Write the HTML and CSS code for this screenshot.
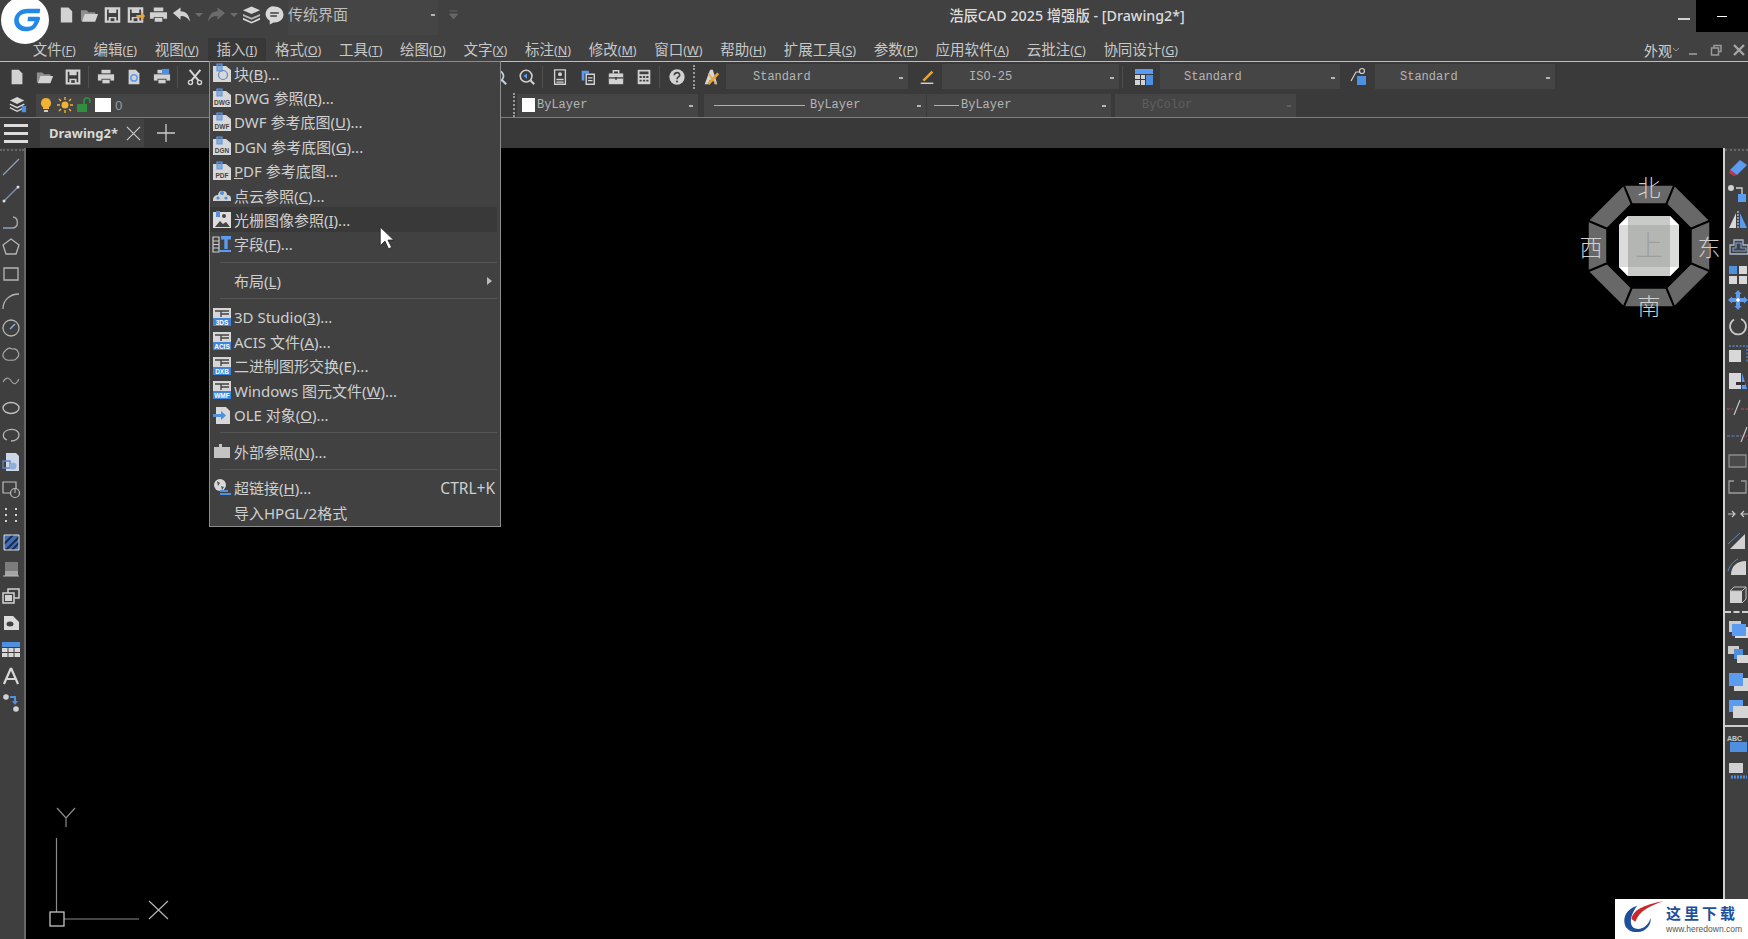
FILE: index.html
```html
<!DOCTYPE html>
<html lang="zh-CN">
<head>
  <meta charset="UTF-8" />
  <title>浩辰CAD 2025 增强版 - [Drawing2*]</title>
  <link rel="stylesheet" href="styles.css">
</head>
<body>
  <!-- shared icons -->
  <svg class="sprite" xmlns="http://www.w3.org/2000/svg">
    <symbol id="i-new" viewBox="0 0 20 20"><path d="M4 2h8l4 4v12H4z" fill="#d2d2d2"/></symbol>
    <symbol id="i-open" viewBox="0 0 20 20"><path d="M1 5h6l2 2h7v2H6L3 16H1z" fill="#8f8f8f"/><path d="M5 9h14l-3 8H2z" fill="#d2d2d2"/></symbol>
    <symbol id="i-save" viewBox="0 0 20 20"><path d="M3 3h14v14H3z" fill="none" stroke="#d2d2d2" stroke-width="2.4"/><path d="M6 3h8v5H6zM6 12h8v5H6z" fill="#d2d2d2"/><path d="M8 13.500h4v3H8z" fill="#404040"/></symbol>
    <symbol id="i-print" viewBox="0 0 20 20"><path d="M5 2h10v4H5z" fill="#d2d2d2"/><path d="M1 7h18v7H1z" fill="#d2d2d2"/><path d="M5 12h10v6H5z" fill="#404040"/><path d="M6 13h8v4H6z" fill="#d2d2d2"/></symbol>
    <symbol id="i-dd" viewBox="0 0 8 8"><path d="M0 2h8L4 6z" fill="#6d6d6d"/></symbol>
    <symbol id="i-doc" viewBox="0 0 20 20"><path d="M1 3h13l5 4v12H1z" fill="#d8d8d8"/><path d="M5 1h5v7H5z" fill="#5b86c5" opacity=".55"/><path d="M5 1h5v7H5z" fill="none" stroke="#5b9bf0" stroke-width="1.200"/></symbol>
    <symbol id="i-imp" viewBox="0 0 20 20"><path d="M1 1h18v11H1z" fill="#d6d6d6"/><path d="M3 4h14M9 7h8M9 4v6" stroke="#444" stroke-width="1.400" fill="none"/><path d="M1 11h18v8H1z" fill="#3f84d8"/></symbol>
  </svg>

  <div class="app">
    <header class="titlebar">
      <div class="quick">
        <svg class="slot-q" viewBox="0 0 20 20"><use href="#i-new"/></svg>
        <svg class="slot-q" viewBox="0 0 20 20"><use href="#i-open"/></svg>
        <svg class="slot-q" viewBox="0 0 20 20"><use href="#i-save"/></svg>
        <svg class="slot-q" viewBox="0 0 20 20"><use href="#i-save"/><path d="M11 10h5V6l4 5-4 6v-4h-5z" fill="#e8a33a"/></svg>
        <svg class="slot-q" viewBox="0 0 20 20"><use href="#i-print"/></svg>
        <svg class="slot-q" viewBox="0 0 20 20"><path d="M1 8l8-6v4c6 0 9 4 10 11-2-4-5-6-10-6v4z" fill="#d2d2d2"/></svg>
        <svg class="slot-d" viewBox="0 0 8 8"><use href="#i-dd"/></svg>
        <svg class="slot-q" viewBox="0 0 20 20"><path d="M19 8l-8-6v4C5 6 2 10 1 17c2-4 5-6 10-6v4z" fill="#6a6a6a"/></svg>
        <svg class="slot-d" viewBox="0 0 8 8"><use href="#i-dd"/></svg>
        <svg class="slot-q" viewBox="0 0 20 20"><path d="M10 1l9 4-9 4-9-4z" fill="#d6d6d6"/><path d="M1 9l9 4 9-4v2l-9 4-9-4z" fill="#b9b9b9"/><path d="M1 13l9 4 9-4v2l-9 4-9-4z" fill="#d6d6d6"/></svg>
        <svg class="slot-q" viewBox="0 0 20 20"><path d="M10 1a9 8 0 0 1 0 17H9l-4 2v-4a8 8 0 0 1 5-15z" fill="#d8d8d8"/><path d="M5.500 8h9M5.500 11h7" stroke="#404040" stroke-width="1.600"/></svg>
        <div class="workspace">传统界面<i class="dot"></i></div>
        <svg class="slot-s" viewBox="0 0 10 12"><path d="M1 2h8M1 5h8L5 10z" fill="#666" stroke="#666"/></svg>
      </div>
      <div class="title">浩辰CAD 2025 增强版 - [Drawing2*]</div>
      <div class="winbtns">
        <span class="win-min"></span>
        <span class="win-black"><span></span></span>
      </div>
    </header>

    <nav class="menubar">
      <span class="mi">文件<small>(<u>F</u>)</small></span>
      <span class="mi">编辑<small>(<u>E</u>)</small></span>
      <span class="mi">视图<small>(<u>V</u>)</small></span>
      <span class="mi active">插入<small>(<u>I</u>)</small></span>
      <span class="mi">格式<small>(<u>O</u>)</small></span>
      <span class="mi">工具<small>(<u>T</u>)</small></span>
      <span class="mi">绘图<small>(<u>D</u>)</small></span>
      <span class="mi">文字<small>(<u>X</u>)</small></span>
      <span class="mi">标注<small>(<u>N</u>)</small></span>
      <span class="mi">修改<small>(<u>M</u>)</small></span>
      <span class="mi">窗口<small>(<u>W</u>)</small></span>
      <span class="mi">帮助<small>(<u>H</u>)</small></span>
      <span class="mi">扩展工具<small>(<u>S</u>)</small></span>
      <span class="mi">参数<small>(<u>P</u>)</small></span>
      <span class="mi">应用软件<small>(<u>A</u>)</small></span>
      <span class="mi">云批注<small>(<u>C</u>)</small></span>
      <span class="mi">协同设计<small>(<u>G</u>)</small></span>
      <div class="menu-right">
        <span class="look">外观<svg viewBox="0 0 8 8"><path d="M1 2l3 3 3-3" fill="none" stroke="#999"/></svg></span>
        <svg class="mw" viewBox="0 0 12 12"><path d="M2 10h8" stroke="#888" stroke-width="2"/></svg>
        <svg class="mw" viewBox="0 0 12 12"><path d="M1.500 4h7v7h-7zM4 4V1.500h7v6H9" fill="none" stroke="#999" stroke-width="1.500"/></svg>
        <svg class="mw" viewBox="0 0 12 12"><path d="M1 1l10 10M11 1L1 11" stroke="#a5a5a5" stroke-width="2.400"/></svg>
      </div>
    </nav>

    <section class="toolbar row1">
      <svg class="ic first" viewBox="0 0 20 20"><use href="#i-new"/></svg>
      <svg class="ic" viewBox="0 0 20 20"><use href="#i-open"/></svg>
      <svg class="ic" viewBox="0 0 20 20"><use href="#i-save"/></svg>
      <i class="sep"></i>
      <svg class="ic" viewBox="0 0 20 20"><use href="#i-print"/></svg>
      <svg class="ic" viewBox="0 0 20 20"><use href="#i-new"/><circle cx="10" cy="11" r="3.500" fill="none" stroke="#5b9bf0" stroke-width="1.600"/></svg>
      <svg class="ic" viewBox="0 0 20 20"><use href="#i-print"/><path d="M10 1h8v6h-8z" fill="#4f8fe0"/></svg>
      <i class="sep"></i>
      <svg class="ic" viewBox="0 0 20 20"><path d="M4 2l10 12M16 2L6 14" stroke="#d6d6d6" stroke-width="2.200"/><circle cx="5" cy="16" r="2.300" fill="none" stroke="#d6d6d6" stroke-width="1.500"/><circle cx="15" cy="16" r="2.300" fill="none" stroke="#d6d6d6" stroke-width="1.500"/></svg>
      <div class="skip-a"></div>
      <svg class="ic" viewBox="0 0 20 20"><circle cx="9" cy="9" r="6" fill="none" stroke="#bcd0ea" stroke-width="2"/><path d="M13 13l5 5" stroke="#bcd0ea" stroke-width="2.400"/></svg>
      <svg class="ic" viewBox="0 0 20 20"><circle cx="9" cy="9" r="6.500" fill="none" stroke="#d0d0d0" stroke-width="1.800"/><path d="M14 14l4 4" stroke="#d0d0d0" stroke-width="2.400"/><path d="M6 9l4-3v6z" fill="#5b9bf0"/></svg>
      <i class="sep narrow"></i>
      <svg class="ic" viewBox="0 0 20 20"><path d="M4 2h12v16H4z" fill="none" stroke="#d2d2d2" stroke-width="1.500"/><circle cx="10" cy="7" r="2.200" fill="#d2d2d2"/><path d="M6 12h8v1.500H6zM6 15h8v1.500H6z" fill="#d2d2d2"/></svg>
      <svg class="ic" viewBox="0 0 20 20"><path d="M3 3h8v3H6v8H3z" fill="#5b9bf0"/><path d="M8 7h9v11H8z" fill="none" stroke="#d2d2d2" stroke-width="1.600"/><path d="M10 11h5M10 14h5" stroke="#d2d2d2" stroke-width="1.400"/></svg>
      <svg class="ic" viewBox="0 0 20 20"><path d="M2 6h16v12H2z" fill="#d2d2d2"/><path d="M7 6V3h6v3" fill="none" stroke="#d2d2d2" stroke-width="1.600"/><path d="M2 11h16" stroke="#404040" stroke-width="1.500"/><path d="M9 10h2v3H9z" fill="#404040"/></svg>
      <svg class="ic" viewBox="0 0 20 20"><path d="M3 2h14v16H3z" fill="#d2d2d2"/><path d="M5 4h10v3H5zM5 9h2.500v2H5zM8.800 9h2.500v2H8.800zM12.500 9H15v2h-2.500zM5 13h2.500v2H5zM8.800 13h2.500v2H8.800zM12.500 13H15v2h-2.500z" fill="#404040"/></svg>
      <i class="sep"></i>
      <svg class="ic" viewBox="0 0 20 20"><circle cx="10" cy="10" r="8.500" fill="#d2d2d2"/><path d="M7 8c0-4 6.500-3.500 6 0 0 2-3 2-3 4.500" fill="none" stroke="#404040" stroke-width="1.800"/><circle cx="10" cy="15" r="1.200" fill="#404040"/></svg>
      <i class="grip"></i>
      <svg class="ic tight" viewBox="0 0 20 20"><path d="M9 2h3l5 16h-3l-1-4H8l-1 4H3z" fill="#d6d6d6"/><path d="M7 18L18 6" stroke="#e8a33a" stroke-width="3"/><path d="M7 6l9 12" stroke="#e8a33a" stroke-width="1.500"/></svg>
      <div class="combo c-text"><span>Standard</span><i class="dot"></i></div>
      <svg class="ic gap5" viewBox="0 0 20 20"><path d="M5 13L15 3l2 2L7 15z" fill="#e8a33a"/><path d="M3 17h14" stroke="#d2d2d2" stroke-width="1.600"/></svg>
      <div class="combo c-dim"><span>ISO-25</span><i class="dot"></i></div>
      <i class="sep wide"></i>
      <svg class="ic big" viewBox="0 0 20 20"><path d="M1 2h18v5H1z" fill="#5b9bf0"/><path d="M1 8h5v4H1zM7 8h4v4H7zM1 13h5v5H1zM7 13h4v5H7z" fill="#d2d2d2"/><path d="M12 8h7v10h-7z" fill="#4f8fe0"/></svg>
      <div class="combo c-table"><span>Standard</span><i class="dot"></i></div>
      <svg class="ic gap4 big" viewBox="0 0 20 20"><path d="M3 14L8 5h4" fill="none" stroke="#d2d2d2" stroke-width="1.200"/><circle cx="14" cy="4" r="2.500" fill="none" stroke="#d2d2d2" stroke-width="1.200"/><path d="M9 9h9v9H9z" fill="#4f8fe0"/></svg>
      <div class="combo c-lead"><span>Standard</span><i class="dot"></i></div>
    </section>

    <section class="toolbar row2">
      <svg class="ic layer" viewBox="0 0 20 20"><path d="M9 1l8 4-8 4-8-4z" fill="#d6d6d6"/><path d="M1 9l8 4 8-4M1 13l8 4 8-4" fill="none" stroke="#d6d6d6" stroke-width="1.600"/><path d="M14 11h5v7h-5z" fill="#4f8fe0"/></svg>
      <div class="combo c-layer">
        <svg class="st" viewBox="0 0 16 16"><path d="M8 1a5 5 0 0 1 3 9v2H5v-2a5 5 0 0 1 3-9z" fill="#f2b233"/><path d="M6 13h4v2H6z" fill="#ccc"/></svg>
        <svg class="st" viewBox="0 0 16 16"><circle cx="8" cy="8" r="3.500" fill="#f2b233"/><path d="M8 0v3M8 13v3M0 8h3M13 8h3M2 2l2 2M12 12l2 2M14 2l-2 2M4 12l-2 2" stroke="#f2b233" stroke-width="1.400"/></svg>
        <svg class="st" viewBox="0 0 16 16"><path d="M1 7h10v8H1z" fill="#2f8f3e"/><path d="M8 7V4a3 3 0 0 1 6 0v2" fill="none" stroke="#2f8f3e" stroke-width="1.600"/></svg>
        <i class="swatch"></i>
        <span class="layer-name">0</span>
      </div>
      <i class="grip g2"></i>
      <div class="combo c-color"><i class="swatch small"></i><span>ByLayer</span><i class="dot"></i></div>
      <div class="combo c-ltype"><i class="ln long"></i><span>ByLayer</span><i class="dot"></i></div>
      <div class="combo c-lw"><i class="ln short"></i><span>ByLayer</span><i class="dot"></i></div>
      <div class="combo c-plot"><span>ByColor</span><i class="dot"></i></div>
    </section>

    <section class="tabbar">
      <div class="burger"><i></i><i></i><i></i></div>
      <div class="tab">
        <span>Drawing2*</span>
        <svg viewBox="0 0 16 16"><path d="M1 1l14 14M15 1L1 15" stroke="#ccc" stroke-width="1.200"/></svg>
      </div>
      <svg class="plus" viewBox="0 0 18 18"><path d="M9 0v18M0 9h18" stroke="#ccc" stroke-width="1.300"/></svg>
    </section>

    <main class="workarea">
      <aside class="leftbar">
        <i class="dash"></i>
        <svg viewBox="0 0 20 20"><path d="M2 18L18 2" stroke="#8fa0b8" stroke-width="1.300"/></svg>
        <svg viewBox="0 0 20 20"><path d="M3 17L17 3" stroke="#7f95b5" stroke-width="1.300"/><circle cx="3" cy="17" r="1.500" fill="#ddd"/><circle cx="17" cy="3" r="1.500" fill="#ddd"/></svg>
        <svg viewBox="0 0 20 20"><path d="M2 17h9c7 0 7-10 1-11" fill="none" stroke="#a8a8a8" stroke-width="1.400"/><path d="M2 17h9" stroke="#6d8ab5" stroke-width="1.400"/></svg>
        <svg viewBox="0 0 20 20"><path d="M10 2l8 6-3 9H5L2 8z" fill="none" stroke="#b5b5b5" stroke-width="1.300"/></svg>
        <svg viewBox="0 0 20 20"><path d="M3 4h14v12H3z" fill="none" stroke="#b5b5b5" stroke-width="1.300"/></svg>
        <svg viewBox="0 0 20 20"><path d="M2 18C2 9 9 3 18 3" fill="none" stroke="#b5b5b5" stroke-width="1.300"/></svg>
        <svg viewBox="0 0 20 20"><circle cx="10" cy="10" r="8" fill="none" stroke="#b5b5b5" stroke-width="1.300"/><path d="M9 11l5-5" stroke="#8fb0dd" stroke-width="1.400"/></svg>
        <svg viewBox="0 0 20 20"><path d="M5 5q3-3 6-1 5-1 6 3 2 3-1 6-2 3-6 2-5 1-7-2-3-4 2-8z" fill="none" stroke="#a8a8a8" stroke-width="1.200"/></svg>
        <svg viewBox="0 0 20 20"><path d="M2 11c4-7 7-3 9 0s5 2 7-3" fill="none" stroke="#9a9a9a" stroke-width="1.300"/></svg>
        <svg viewBox="0 0 20 20"><ellipse cx="10" cy="10" rx="8" ry="5.500" fill="none" stroke="#c0c0c0" stroke-width="1.300"/></svg>
        <svg viewBox="0 0 20 20"><path d="M6 15C1 13 1 7 7 5c6-2 11 1 11 5s-4 6-8 6" fill="none" stroke="#b5b5b5" stroke-width="1.300"/></svg>
        <svg viewBox="0 0 20 20"><path d="M5 1h10l3 3v15H5z" fill="#cfd7e6"/><path d="M2 9h7v7H2z" fill="none" stroke="#5b86c5" stroke-width="1.300"/><circle cx="12" cy="14" r="3.500" fill="#8fb0dd"/></svg>
        <svg viewBox="0 0 20 20"><path d="M2 3h13v11H2z" fill="none" stroke="#bdbdbd" stroke-width="1.200"/><circle cx="14" cy="14" r="4.500" fill="#404040" stroke="#bdbdbd" stroke-width="1.200"/><path d="M14 10v4" stroke="#bdbdbd"/></svg>
        <svg viewBox="0 0 20 20"><path d="M4 3h2v2H4zM14 3h2v2h-2zM4 9h2v2H4zM14 9h2v2h-2zM4 15h2v2H4zM14 15h2v2h-2z" fill="#d2d2d2"/></svg>
        <svg viewBox="0 0 20 20"><path d="M3 3h15v15H3z" fill="#3e6fb8"/><path d="M5 18L18 5M3 12l9-9M11 18l7-7" stroke="#1f2a44" stroke-width="1.800"/><path d="M3 3h15v15H3z" fill="none" stroke="#ddd" stroke-width="1"/></svg>
        <svg viewBox="0 0 20 20"><path d="M4 3h13v14H4z" fill="#7c7c7c"/><path d="M4 12h13v5H4z" fill="#a5a5a5"/><path d="M2 17h16" stroke="#bbb"/></svg>
        <svg viewBox="0 0 20 20"><path d="M7 3h11v9H7z" fill="none" stroke="#d2d2d2" stroke-width="1.500"/><path d="M2 7h11v10H2z" fill="#404040" stroke="#d2d2d2" stroke-width="1.500"/><path d="M4 9h7v6H4z" fill="#d2d2d2"/></svg>
        <svg viewBox="0 0 20 20"><path d="M3 3h9l6 6v8H3z" fill="#dcdcdc"/><ellipse cx="9" cy="11" rx="3.500" ry="2.500" fill="#404040"/></svg>
        <svg viewBox="0 0 20 20"><path d="M1 3h18v5H1z" fill="#4f8fe0"/><path d="M1 9h5.500v4H1zM7.500 9h5v4h-5zM13.500 9H19v4h-5.500zM1 14h5.500v4H1zM7.500 14h5v4h-5zM13.500 14H19v4h-5.500z" fill="#d8d8d8"/></svg>
        <svg viewBox="0 0 20 20"><path d="M10 2L3 18M10 2l7 16M5.500 13h9" fill="none" stroke="#d8d8d8" stroke-width="2.200"/></svg>
        <svg viewBox="0 0 20 20"><circle cx="5" cy="4" r="2.800" fill="#d2d2d2"/><circle cx="15" cy="16" r="2.800" fill="#d2d2d2"/><path d="M9 4h5v6" fill="none" stroke="#4f8fe0" stroke-width="2"/><path d="M11 8h6l-3 4z" fill="#4f8fe0"/></svg>
      </aside>

      <div class="canvas">
        <!-- view cube -->
        <svg class="viewcube" viewBox="-80 -80 160 160">
          <g fill="#686868" stroke="#000" stroke-width="1.500">
            <polygon id="seg" points="-25,-61 25,-61 17,-42 -17,-42"/>
            <use href="#seg" transform="rotate(45)"/>
            <use href="#seg" transform="rotate(90)"/>
            <use href="#seg" transform="rotate(135)"/>
            <use href="#seg" transform="rotate(180)"/>
            <use href="#seg" transform="rotate(225)"/>
            <use href="#seg" transform="rotate(270)"/>
            <use href="#seg" transform="rotate(315)"/>
          </g>
          <polygon points="-21,-30 21,-30 30,-21 30,21 21,30 -21,30 -30,21 -30,-21" fill="#dcdcdc"/>
          <path d="M-30-21l9-9v9zM30-21l-9-9v9zM-30 21l9 9v-9zM30 21l-9 9v-9z" fill="#fff"/>
          <rect x="-21" y="-30" width="42" height="60" fill="#c9cbc9"/>
          <rect x="-21" y="-21" width="42" height="42" fill="#b4b6b4"/>
          <text class="vc-top" x="0" y="10">上</text>
          <text class="vc" x="0" y="-50">北</text>
          <text class="vc" x="0" y="69">南</text>
          <text class="vc" x="-58" y="10">西</text>
          <text class="vc" x="60" y="10">东</text>
        </svg>

        <!-- ucs icon -->
        <svg class="ucs" viewBox="0 0 150 149">
          <g fill="none" stroke="#8a8a8a" stroke-width="1.200">
            <path d="M26.500 48v74"/>
            <path d="M34 129h75"/>
            <path d="M27 18l9 10 9-10M36 28v9"/>
            <path d="M119 111l19 18M138 111l-19 18" stroke="#b5b5b5"/>
            <rect x="20" y="122" width="14" height="14" stroke="#d5d5d5"/>
          </g>
        </svg>
      </div>

      <aside class="rightbar">
        <i class="dash"></i>
        <svg viewBox="0 0 22 20"><path d="M3 13L13 3l7 5-10 10z" fill="#5b9bf0"/><path d="M3 13l7 5-3 1-5-3z" fill="#c8344a"/></svg>
        <svg viewBox="0 0 22 20"><circle cx="4" cy="4" r="3" fill="#d2d2d2"/><path d="M9 4h6v6" fill="none" stroke="#d2d2d2" stroke-width="1.300"/><path d="M11 10h8v8h-8z" fill="#5b9bf0"/></svg>
        <svg viewBox="0 0 22 20"><path d="M9 3v15H2z" fill="#d8d8d8"/><path d="M13 3v15h7z" fill="#5b9bf0"/><path d="M11 1v18" stroke="#eee" stroke-dasharray="2 1"/></svg>
        <svg viewBox="0 0 22 20"><path d="M3 8h4V3h9v5h5v9H3z" fill="none" stroke="#aab8cc" stroke-width="1.300"/><path d="M6 11h3V6h5v5h5v3H6z" fill="none" stroke="#7f9fd0" stroke-width="1.100"/></svg>
        <svg viewBox="0 0 22 20"><path d="M2 2h8v8H2z" fill="#4f8fe0"/><path d="M12 2h8v8h-8zM2 12h8v8H2zM12 12h8v8h-8z" fill="#d8d8d8"/></svg>
        <svg viewBox="0 0 22 20"><path d="M11 0l3.500 4H13v4h-4V4H7.500zM11 20l3.500-4H13v-4h-4v4H7.500zM1 10l4-3.500V8h4v4H5v1.500zM21 10l-4-3.500V8h-4v4h4v1.500z" fill="#5b9bf0"/><circle cx="11" cy="10" r="2" fill="#fff"/></svg>
        <svg viewBox="0 0 22 20"><path d="M7 2.500A8 8 0 1 0 14 2" fill="none" stroke="#c8c8c8" stroke-width="1.700"/></svg>
        <svg viewBox="0 0 22 20"><path d="M2 2h18v16" fill="none" stroke="#5b86c5" stroke-dasharray="2 1.500" stroke-width="1.300"/><path d="M2 6h12v12H2z" fill="#d8d8d8"/></svg>
        <svg viewBox="0 0 22 20"><path d="M2 2h12v16H2z" fill="#d8d8d8"/><path d="M15 2l5 16h-5z" fill="#5b9bf0"/><path d="M9 11h9v3H9z" fill="#333"/></svg>
        <svg viewBox="0 0 22 20"><path d="M0 12h6M14 12h8" stroke="#b5505a" stroke-dasharray="3 1.500" stroke-width="1.200"/><path d="M7 18l6-15" stroke="#ccc" stroke-width="1.100"/></svg>
        <svg viewBox="0 0 22 20"><path d="M0 12h12" stroke="#5b86c5" stroke-dasharray="3 1.500" stroke-width="1.200"/><path d="M13 12h7" stroke="#b5505a" stroke-dasharray="2 1" stroke-width="1.200"/><path d="M14 18l6-15" stroke="#ccc" stroke-width="1.100"/></svg>
        <svg viewBox="0 0 22 20"><path d="M2 4h17v12H2z" fill="#4a4a4a" stroke="#8a8a8a" stroke-width="1.300"/></svg>
        <svg viewBox="0 0 22 20"><path d="M7 4H2v12h17V4h-5" fill="none" stroke="#9a9a9a" stroke-width="1.300"/></svg>
        <svg viewBox="0 0 22 20"><path d="M1 10h7M5 7l3 3-3 3M21 10h-7M17 7l-3 3 3 3" fill="none" stroke="#c8c8c8" stroke-width="1.200"/></svg>
        <svg viewBox="0 0 22 20"><path d="M3 18L18 3v15z" fill="#d2d2d2"/><path d="M1 13L13 2" stroke="#5b86c5" stroke-width="1"/></svg>
        <svg viewBox="0 0 22 20"><path d="M4 18C4 9 10 4 19 4v14z" fill="#d2d2d2"/><path d="M1 14C3 8 7 4 11 2" fill="none" stroke="#5b86c5"/></svg>
        <svg viewBox="0 0 22 20"><path d="M3 7h12v12H3z" fill="#d2d2d2"/><path d="M3 7l4-4h12l-4 4zM15 7l4-4v12l-4 4" fill="none" stroke="#bdbdbd"/></svg>
        <i class="rsep dashed"></i>
        <svg viewBox="0 0 22 20"><path d="M8 8h14v11H8z" fill="#ddd"/><path d="M2 2h12v11H2z" fill="#ccc"/><path d="M5 5h14v12H5z" fill="#5b9bf0"/></svg>
        <svg viewBox="0 0 22 20"><path d="M1 1h11v8H1z" fill="#ccc"/><path d="M7 4h9v10H7z" fill="#4f8fe0"/><path d="M10 10h11v8H10z" fill="#d5d5d5"/></svg>
        <svg viewBox="0 0 22 20"><path d="M7 6h14v13H7z" fill="#d5d5d5"/><path d="M2 1h14v13H2z" fill="#5b9bf0"/></svg>
        <svg viewBox="0 0 22 20"><path d="M2 1h14v12H2z" fill="#5b9bf0"/><path d="M6 7h15v12H6z" fill="#d5d5d5"/></svg>
        <i class="rsep"></i>
        <svg viewBox="0 0 22 20"><text class="abc" x="0" y="7">ABC</text><path d="M3 8h17v10H3z" fill="#4f8fe0"/></svg>
        <svg viewBox="0 0 22 20"><path d="M2 2h14v10H2z" fill="#d0d0d0"/><path d="M4 16h16" stroke="#4f8fe0" stroke-dasharray="2 1" stroke-width="3"/></svg>
      </aside>
    </main>
  </div>

  <!-- app logo -->
  <div class="logo">
    <svg viewBox="0 0 48 48"><path d="M37 15H25c-9 0-11 6-10 10 1 5 6 8 10 8h3c5 0 7-4 8-10H26" fill="none" stroke="#2288ea" stroke-width="4.500" stroke-linejoin="round" transform="skewX(-8) translate(4 0)"/></svg>
  </div>

  <!-- insert menu -->
  <div class="menu">
    <div class="row"><svg viewBox="0 0 20 20"><use href="#i-doc"/><circle cx="11" cy="12" r="4.500" fill="none" stroke="#5b86c5" stroke-width="1.200"/></svg><span>块(<u>B</u>)...</span></div>
    <div class="row"><svg viewBox="0 0 20 20"><use href="#i-doc"/><text x="10" y="17" class="tag dark">DWG</text></svg><span>DWG 参照(<u>R</u>)...</span></div>
    <div class="row"><svg viewBox="0 0 20 20"><use href="#i-doc"/><text x="10" y="17" class="tag dark">DWF</text></svg><span>DWF 参考底图(<u>U</u>)...</span></div>
    <div class="row"><svg viewBox="0 0 20 20"><use href="#i-doc"/><text x="10" y="17" class="tag dark">DGN</text></svg><span>DGN 参考底图(<u>G</u>)...</span></div>
    <div class="row"><svg viewBox="0 0 20 20"><use href="#i-doc"/><text x="10" y="17" class="tag dark">PDF</text></svg><span><u>P</u>DF 参考底图...</span></div>
    <div class="row"><svg viewBox="0 0 20 20"><path d="M1 14q1-4 5-4 1-5 5-4 4 0 4 4 4 0 4 4v2H1z" fill="#d2d2d2"/><circle cx="10" cy="8" r="2" fill="#4f8fe0"/><circle cx="6" cy="13" r="1.600" fill="#4f8fe0"/><circle cx="14" cy="13" r="1.600" fill="#4f8fe0"/></svg><span>点云参照(<u>C</u>)...</span></div>
    <div class="row hover"><svg viewBox="0 0 20 20"><path d="M1 2h18v16H1z" fill="#dcdcdc"/><path d="M3 17l5-6 3 3 3-2 4 5z" fill="#444"/><circle cx="12" cy="6" r="2" fill="#444"/><path d="M4 1h4v6H4z" fill="#4f8fe0"/></svg><span>光栅图像参照(<u>I</u>)...</span></div>
    <div class="row"><svg viewBox="0 0 20 20"><path d="M1 3h6v15H1z" fill="none" stroke="#ccc" stroke-width="1.200"/><path d="M1 7h6M1 10.500h6M1 14h6" stroke="#ccc"/><path d="M9 2h10v3.500h-3.300V15H12.300V5.500H9z" fill="#5b9bf0"/><path d="M8 16h11v2H8z" fill="#5b9bf0"/></svg><span>字段(<u>F</u>)...</span></div>
    <div class="msep"></div>
    <div class="row"><i class="noicon"></i><span>布局(<u>L</u>)</span><i class="arrow"></i></div>
    <div class="msep"></div>
    <div class="row"><svg viewBox="0 0 20 20"><use href="#i-imp"/><text x="10" y="18" class="tag">3DS</text></svg><span>3D Studio(<u>3</u>)...</span></div>
    <div class="row"><svg viewBox="0 0 20 20"><use href="#i-imp"/><text x="10" y="18" class="tag">ACIS</text></svg><span>ACIS 文件(<u>A</u>)...</span></div>
    <div class="row"><svg viewBox="0 0 20 20"><use href="#i-imp"/><text x="10" y="18" class="tag">DXB</text></svg><span>二进制图形交换(E)...</span></div>
    <div class="row"><svg viewBox="0 0 20 20"><use href="#i-imp"/><text x="10" y="18" class="tag">WMF</text></svg><span>Windows 图元文件(<u>W</u>)...</span></div>
    <div class="row"><svg viewBox="0 0 20 20"><path d="M4 2h10l4 4v13H4z" fill="#d8d8d8"/><path d="M1 9h8V6l5 4.500L9 15v-3H1z" fill="#4f8fe0"/></svg><span>OLE 对象(<u>O</u>)...</span></div>
    <div class="msep"></div>
    <div class="row"><svg viewBox="0 0 20 20"><path d="M2 6h5V3h3v3h8v11H2z" fill="#c4c4c4"/></svg><span>外部参照(<u>N</u>)...</span></div>
    <div class="msep"></div>
    <div class="row"><svg viewBox="0 0 20 20"><circle cx="8" cy="7" r="6" fill="#d8d8d8"/><path d="M5 3l3 2-2 3zM9 8l3 1-2 3z" fill="#555"/><path d="M8 16h11M8 13h8" stroke="#4f8fe0" stroke-width="1.800"/></svg><span>超链接(<u>H</u>)...</span><em>CTRL+K</em></div>
    <div class="row"><i class="noicon"></i><span>导入HPGL/2格式</span></div>
  </div>

  <!-- mouse pointer -->
  <svg class="pointer" viewBox="0 0 16 24"><path d="M1 1v18l4.500-4.500L9 22l3-1.500-3.500-7H14z" fill="#fff" stroke="#222" stroke-width="0.800"/></svg>

  <!-- watermark -->
  <div class="watermark">
    <svg viewBox="0 0 48 40"><path d="M20 6C8 10 5 18 7 26c2 7 12 10 20 6 5-3 8-8 7-13-2 8-9 13-16 11-6-2-7-12 2-24z" fill="#1d4f9c"/><path d="M14 20C15 11 26 5 48 1 34 6 22 11 18 23z" fill="#c9282d"/></svg>
    <div class="wm-text">
      <b>这里下载</b>
      <span>www.heredown.com</span>
    </div>
  </div>
</body>
</html>
```

FILE: styles.css
```css
* { box-sizing: border-box; margin: 0; padding: 0; }
html, body { height: 100%; overflow: hidden; }
body { font-family: "Noto Sans", "Noto Sans CJK SC", sans-serif; background: #3c3c3c; color: #cfcfcf; }
i, em { font-style: normal; }
svg { display: block; flex: none; }
.sprite { display: none; }
.app { display: flex; flex-direction: column; height: 100vh; }

/* title bar */
.titlebar { display: flex; height: 38px; background: #414141; flex: none; }
.quick { display: flex; align-items: flex-start; width: 470px; height: 38px; padding-left: 55px; flex: none; }
.slot-q { width: 23px; height: 20px; padding: 0 2px; margin-top: 5px; }
.slot-d { width: 12px; height: 8px; padding: 0 2px; margin-top: 11px; }
.slot-s { width: 15px; height: 12px; margin: 9px 0 0 8px; }
.workspace { display: flex; align-items: center; width: 150px; height: 35px; padding-bottom: 8px; margin-left: 2px; background: #454545; font-size: 15px; color: #bdbdbd; position: relative; }
.dot { display: block; width: 4px; height: 2px; background: #b5b5b5; position: absolute; right: 3px; top: 50%; }
.workspace .dot { top: 14px; }
.title { flex: 1; text-align: center; font-size: 14.300px; font-weight: 500; color: #dcdcdc; line-height: 32px; }
.winbtns { display: flex; width: 84px; height: 32px; justify-content: flex-end; align-items: flex-start; }
.win-min { display: block; width: 12px; height: 2px; background: #d0d0d0; margin: 18px 6px 0 0; }
.win-black { display: flex; align-items: center; justify-content: center; width: 52px; height: 32px; background: #000; }
.win-black span { display: block; width: 10px; height: 1px; background: #fff; }

/* menu */
.menubar { display: flex; align-items: center; background: #414141; border-bottom: 1px solid #bdbdbd; flex: none; padding-left: 24px; height: 24px; }
.mi { padding: 0 8.850px; height: 23px; line-height: 23px; font-size: 14.500px; color: #c8c8c8; white-space: nowrap; }
.mi small { font-size: 12.500px; }
.mi.active { background: #383838; }
.menu-right { margin-left: auto; display: flex; align-items: center; }
.look { display: flex; align-items: center; font-size: 14px; }
.look svg { width: 8px; height: 8px; }
.mw { width: 12px; height: 12px; margin-left: 11px; }
.look + .mw { margin-left: 7px; }
.mw:last-child { margin-right: 3px; }

/* toolbars */
.toolbar { display: flex; align-items: center; background: #3a3a3a; flex: none; position: relative; }
.row1 { height: 28px; padding-top: 1px; }
.row2 { height: 28px; border-bottom: 1px solid #7d7d7d; padding-top: 3px; }
.ic { width: 28px; height: 18px; padding: 0 4px; color: #ccc; }
.ic.big { height: 20px; padding: 0 3px; }
.ic.first { margin-left: 3px; }
.sep { display: block; width: 4px; height: 22px; border-left: 1px solid #4e4e4e; margin-left: 1px; }
.sep.narrow { width: 4px; }
.sep.wide { width: 8px; margin-left: 3px; }
.skip-a { width: 276px; flex: none; }
.grip { display: block; width: 4px; height: 24px; margin: 0 0 0 2px; border-left: 2px dotted #9a9a9a; }
.ic.tight { margin-left: 0; }
.ic.gap5 { margin-left: 5px; }
.ic.gap4 { margin-left: 4px; }
.combo { display: flex; align-items: center; height: 25px; background: #454545; font-family: "Liberation Mono", monospace; font-size: 12px; color: #b5b5b5; position: relative; flex: none; }
.c-text { width: 182px; padding-left: 27px; margin-left: 1px; }
.c-dim { width: 177px; padding-left: 27px; margin-left: 1px; }
.c-table { width: 180px; padding-left: 24px; margin-left: 2px; }
.c-lead { width: 180px; padding-left: 25px; margin-left: 3px; }
.row2 .ic.layer { width: 36px; padding: 0 8px 0 8px; }
.c-layer { width: 464px; height: 23px; padding-left: 1px; gap: 3px; }
.st { width: 16px; height: 16px; margin-left: 0; }
.c-layer .st:first-child { margin-left: 1px; }
.swatch { display: block; width: 16px; height: 14px; background: #fff; margin-left: 0; }
.swatch.small { width: 13px; }
.layer-name { font-size: 13px; font-family: "Noto Sans", sans-serif; color: #999; margin-left: 1px; }
.g2 { height: 24px; margin-left: 13px; }
.c-color { width: 181px; height: 23px; margin-left: 0; padding-left: 5px; gap: 2px; }
.c-ltype { width: 222px; height: 23px; margin-left: 6px; padding-left: 10px; gap: 5px; }
.c-lw { width: 185px; height: 23px; padding-left: 7px; gap: 2px; border-left: 1px solid #3a3a3a; }
.c-plot { width: 182px; height: 23px; margin-left: 3px; padding-left: 27px; color: #5f5f5f; border-left: 1px solid #3a3a3a; }
.c-plot .dot { background: #5f5f5f; }
.ln { display: block; height: 1px; background: #b0b0b0; }
.ln.long { width: 91px; }
.ln.short { width: 25px; }
.combo .dot { right: 5px; }

/* tabs */
.tabbar { display: flex; align-items: center; height: 30px; background: #393939; flex: none; }
.burger { display: flex; flex-direction: column; gap: 5px; width: 24px; margin-left: 4px; }
.burger i { display: block; height: 3px; background: #dcdcdc; }
.tab { display: flex; align-items: center; width: 104px; height: 28px; margin-left: 12px; padding-left: 9px; background: #424242; font-size: 13px; font-weight: 700; color: #d8d8d8; }
.tab svg { width: 15px; height: 15px; margin-left: 8px; }
.plus { width: 18px; height: 18px; margin-left: 13px; }

/* main */
.workarea { display: flex; flex: 1; min-height: 0; }
.leftbar { width: 26px; background: #3f3f3f; border-right: 2px solid #686868; flex: none; }
.leftbar .dash, .rightbar .dash { display: block; height: 5px; border-top: 2px dotted #666; margin-top: 1px; }
.leftbar svg { width: 20px; height: 20px; margin: 0 0 6.800px 1px; }
.leftbar .dash + svg { margin-top: 3px; }
.canvas { flex: 1; background: #000; position: relative; }
.rightbar { width: 25px; background: #404040; border-left: 2px solid #cfcfcf; flex: none; overflow: hidden; }
.rightbar svg { width: 22px; height: 20px; margin: 0 0 6.700px 2px; }
.rightbar .dash + svg { margin-top: 3px; }
.rsep { display: block; height: 2px; margin: 0 0 7px; background: #cfcfcf; }
.rsep.dashed { background: none; border-top: 2px dashed #cfcfcf; margin: 1px 0 6px; }
.abc { font: bold 7px "Liberation Sans", sans-serif; fill: #c8c8c8; }

/* view cube */
.viewcube { position: absolute; left: 1543px; top: 18px; width: 160px; height: 160px; }
.vc { font: 300 23px "Noto Sans CJK SC", sans-serif; fill: #cfcfcf; text-anchor: middle; }
.vc-top { font: 300 28px "Noto Sans CJK SC", sans-serif; fill: #9d9f9d; text-anchor: middle; }

/* ucs */
.ucs { position: absolute; left: 4px; top: 642px; width: 150px; height: 149px; }

/* logo */
.logo { position: absolute; left: 1px; top: -4px; width: 48px; height: 48px; border-radius: 50%; background: #fff; }

/* insert menu */
.menu { position: absolute; left: 209px; top: 61px; width: 292px; height: 466px; background: #414141; border: 1px solid #8c8c8c; font-size: 15px; color: #cfcfcf; }
.row { display: flex; align-items: center; height: 24.400px; padding-left: 2px; position: relative; margin-right: 3px; }
.row:first-child { margin-top: -1px; }
.row svg { width: 20px; height: 20px; }
.row span { margin-left: 2px; white-space: nowrap; }
.row.hover { background: #393939; }
.row em { margin-left: auto; font-size: 15.500px; padding-right: 2px; }
.noicon { display: block; width: 20px; flex: none; }
.arrow { display: block; margin-left: auto; margin-right: 5px; border-left: 5px solid #bbb; border-top: 4px solid transparent; border-bottom: 4px solid transparent; }
.msep { height: 12.200px; display: flex; align-items: center; }
.msep::before { content: ""; display: block; width: 100%; margin: 0 3px 0 10px; height: 1px; background: #555; }
.tag { font: bold 6.500px "Liberation Sans", sans-serif; fill: #fff; text-anchor: middle; }
.tag.dark { fill: #444; }

/* pointer */
.pointer { position: absolute; left: 379px; top: 226px; width: 17px; height: 25px; }

/* watermark */
.watermark { position: absolute; right: 0; bottom: 0; width: 133px; height: 40px; background: #fff; display: flex; align-items: center; }
.watermark svg { width: 46px; height: 38px; margin-left: 3px; }
.wm-text { display: flex; flex-direction: column; margin-left: 2px; color: #1d4f9c; white-space: nowrap; }
.wm-text b { font: 700 15px "Noto Sans CJK SC", sans-serif; letter-spacing: 3px; line-height: 19px; }
.wm-text span { font: 8.500px "Liberation Sans", sans-serif; color: #555; line-height: 14px; }
```
